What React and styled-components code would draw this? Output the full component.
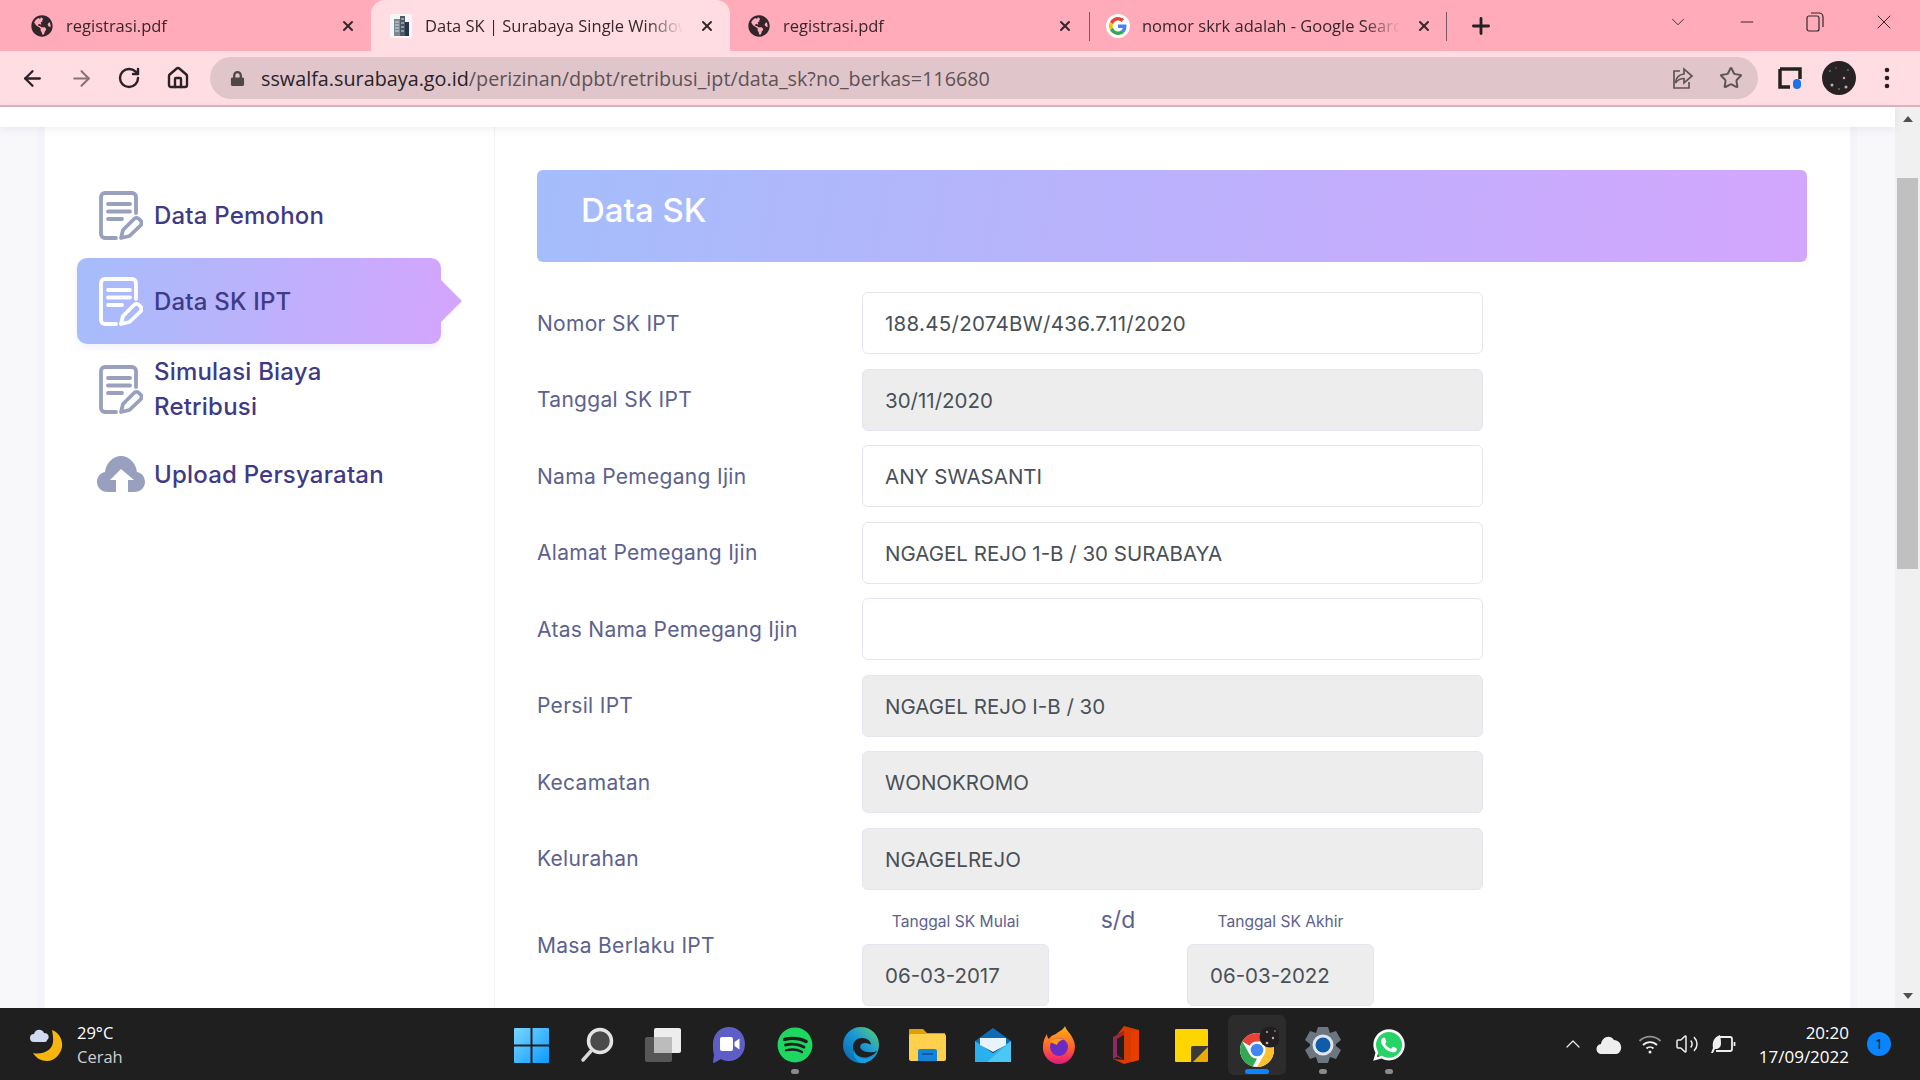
import React from "react";
import styled, { createGlobalStyle } from "styled-components";
import { ArrowLeft, ArrowRight, RotateCw, Home, Star, X, Plus, ChevronDown, Minus, ChevronUp, Volume2 } from "lucide-react";
import { FaGlobeAmericas, FaSpotify, FaWhatsapp, FaLock } from "react-icons/fa";

const GlobalStyle = createGlobalStyle`
  html, body { margin: 0; padding: 0; height: 100%; overflow: hidden; }
  * { box-sizing: border-box; }
  body { font-family: "Inter", "Noto Sans", sans-serif; }
`;

const Screen = styled.div`
  width: 1920px;
  height: 1080px;
  display: flex;
  flex-direction: column;
  overflow: hidden;
  background: #fff;
`;

/* browser chrome */
const TabStrip = styled.div`
  height: 51px;
  flex: none;
  background: #ffabb9;
  display: flex;
  align-items: stretch;
  font-family: "Open Sans", "Noto Sans", sans-serif;
`;

const Tab = styled.div`
  position: relative;
  width: ${(p) => p.$width}px;
  flex: none;
  display: flex;
  align-items: center;
  padding: 0 ${(p) => p.$padRight || 15}px 0 ${(p) => p.$pad}px;
  gap: 12px;
  color: #35272c;
  font-size: 16.5px;
  background: ${(p) => (p.$active ? "#ffdde3" : "transparent")};
  border-radius: ${(p) => (p.$active ? "14px 14px 0 0" : "0")};
  &::after {
    content: "";
    display: ${(p) => (p.$divider ? "block" : "none")};
    position: absolute;
    right: 0;
    top: 12px;
    height: 29px;
    width: 1px;
    background: #7a5a62;
  }
`;

const TabTitle = styled.span`
  flex: 1;
  min-width: 0;
  margin-right: 4px;
  overflow: hidden;
  white-space: nowrap;
  -webkit-mask-image: linear-gradient(to right, #000 86%, transparent 100%);
  mask-image: linear-gradient(to right, #000 86%, transparent 100%);
`;

const TabFavicon = styled.span`
  width: 24px;
  height: 24px;
  flex: none;
  display: flex;
  align-items: center;
  justify-content: center;
`;

const StripTail = styled.div`
  flex: 1;
  display: flex;
  align-items: center;
  padding: 0 2px 0 21px;
  color: #222;
`;

const WindowButtons = styled.div`
  margin-left: auto;
  display: flex;
  align-items: center;
  height: 100%;
  padding-bottom: 8px;
`;

const WindowButton = styled.span`
  width: 68.5px;
  display: flex;
  justify-content: center;
  color: #33282b;
`;

const Toolbar = styled.div`
  height: 56px;
  flex: none;
  background: #ffdde3;
  border-bottom: 2px solid #d9b4bc;
  display: flex;
  align-items: center;
  padding: 0 0 0 20px;
`;

const NavButton = styled.span`
  width: 48.5px;
  flex: none;
  display: flex;
  color: ${(p) => (p.$muted ? "#85757a" : "#2a2226")};
`;

const AddressBar = styled.div`
  width: 1548px;
  height: 42px;
  margin-left: -4px;
  flex: none;
  border-radius: 21px;
  background: #e0c6ca;
  display: flex;
  align-items: center;
  padding: 0 3px 0 20px;
  font-family: "Open Sans", "Noto Sans", sans-serif;
  font-size: 19.8px;
  color: #5f5257;
`;

const UrlText = styled.div`
  margin-left: 16px;
  flex: 1;
  white-space: nowrap;
  b { font-weight: 400; color: #2b2226; }
`;

const BarIcon = styled.span`
  width: 48px;
  display: flex;
  justify-content: center;
  color: #5f5458;
`;

const ToolbarRight = styled.div`
  display: flex;
  align-items: center;
  margin-left: 20px;
  gap: 20px;
  color: #2a2226;
`;

const MenuDotsWrap = styled.span`
  display: flex;
  margin-left: 8px;
`;

/* page */
const Viewport = styled.div`
  flex: 1;
  min-height: 0;
  display: flex;
`;

const Page = styled.div`
  flex: 1;
  min-width: 0;
  display: flex;
  flex-direction: column;
  background: #f8f8fb;
`;

const TopBand = styled.div`
  height: 20px;
  flex: none;
  background: #fff;
  box-shadow: 0 2px 10px rgba(90, 90, 130, 0.1);
  position: relative;
`;

const Card = styled.div`
  flex: 1;
  margin-left: 45px;
  width: 1805px;
  background: #fff;
  display: flex;
  min-height: 0;
  box-shadow: 7px 0 0 #f4f4fa, -7px 0 0 #f4f4fa;
`;

const Sidebar = styled.nav`
  width: 450px;
  flex: none;
  border-right: 1px solid #f0f0f5;
  padding: 45px 0 0 32px;
`;

const MenuItem = styled.div`
  position: relative;
  width: 364px;
  min-height: ${(p) => p.$h || 86}px;
  display: flex;
  align-items: center;
  gap: 9px;
  padding: 0 0 0 20px;
  border-radius: 10px;
  color: #3f3a85;
  font-size: 24px;
  letter-spacing: 0.2px;
  font-weight: 500;
  line-height: 35px;
  background: ${(p) => (p.$active ? "linear-gradient(100deg, #a5bdfb, #d3a6fd)" : "transparent")};
  box-shadow: ${(p) => (p.$active ? "0 3px 6px rgba(120,120,200,0.12)" : "none")};
  &::after {
    content: "";
    display: ${(p) => (p.$active ? "block" : "none")};
    position: absolute;
    left: 100%;
    top: 22px;
    border-left: 21px solid #d3a6fd;
    border-top: 21px solid transparent;
    border-bottom: 21px solid transparent;
  }
`;

const MenuIcon = styled.span`
  width: 48px;
  flex: none;
  display: flex;
  justify-content: center;
`;

const Main = styled.main`
  flex: 1;
  min-width: 0;
  padding: 43px 43px 0 42px;
`;

const Banner = styled.div`
  height: 92px;
  border-radius: 6px;
  background: linear-gradient(100deg, #a5bdfb, #d3a6fd);
  color: #fff;
  font-size: 33px;
  font-weight: 500;
  padding: 20px 0 0 44px;
  line-height: 40px;
  margin-bottom: 30px;
`;

const Row = styled.div`
  width: 946px;
  display: grid;
  grid-template-columns: 325px 621px;
  align-items: center;
  margin-bottom: 14.5px;
`;

const Label = styled.div`
  font-size: 21px;
  letter-spacing: 0.3px;
  color: #5d618e;
  padding-bottom: ${(p) => p.$pb || 0}px;
`;

const Field = styled.div`
  height: 62px;
  border: 1px solid #e4e6ef;
  border-radius: 6px;
  background: ${(p) => (p.$readOnly ? "#ededed" : "#fff")};
  color: #495057;
  font-size: 20.5px;
  letter-spacing: ${(p) => p.$spacing || 0}px;
  line-height: 61px;
  padding: 0 22px;
  white-space: nowrap;
`;

const DateColumns = styled.div`
  display: grid;
  grid-template-columns: 187px 138px 187px;
`;

const DateColumn = styled.div`
  display: flex;
  flex-direction: column;
`;

const SmallLabel = styled.div`
  height: 40px;
  font-size: 15.6px;
  color: #5d618e;
  text-align: center;
  line-height: 36px;
`;

const Until = styled.div`
  text-align: center;
  font-size: 23px;
  color: #5d618e;
  line-height: 32px;
`;

/* scrollbar */
const ScrollTrack = styled.div`
  width: 25px;
  flex: none;
  background: #f0f0f0;
  display: flex;
  flex-direction: column;
  align-items: center;
`;

const ScrollArrow = styled.div`
  height: 24px;
  flex: none;
  display: flex;
  align-items: center;
  &::before {
    content: "";
    border-left: 5.5px solid transparent;
    border-right: 5.5px solid transparent;
    ${(p) => (p.$down ? "border-top: 6px solid #505050;" : "border-bottom: 6px solid #505050;")}
  }
`;

const ScrollThumb = styled.div`
  width: 21px;
  height: 391px;
  margin-top: 47px;
  margin-bottom: auto;
  background: #c0c0c0;
`;

/* taskbar */
const Taskbar = styled.footer`
  height: 72px;
  flex: none;
  background: #1f1f1f;
  display: grid;
  grid-template-columns: 1fr 924px 1fr;
  color: #fff;
  font-family: "Open Sans", "Noto Sans", sans-serif;
`;

const Weather = styled.div`
  display: flex;
  align-items: center;
  padding-left: 28px;
  gap: 13px;
`;

const WeatherText = styled.div`
  font-size: 16.5px;
  line-height: 24px;
  padding-top: 2px;
  span { display: block; color: #cfcfcf; }
`;

const AppRow = styled.div`
  display: grid;
  grid-template-columns: repeat(14, 66px);
`;

const AppSlot = styled.div`
  position: relative;
  display: flex;
  align-items: center;
  justify-content: center;
  padding-top: 2px;
  &::before {
    content: "";
    display: ${(p) => (p.$active ? "block" : "none")};
    position: absolute;
    inset: 7px 4px 5px 4px;
    background: #2c2c2c;
    border-radius: 6px;
  }
  &::after {
    content: "";
    display: ${(p) => (p.$state ? "block" : "none")};
    position: absolute;
    bottom: 6px;
    left: 50%;
    transform: translateX(-50%);
    height: 5px;
    border-radius: 3px;
    width: ${(p) => (p.$state === "active" ? 24 : 8)}px;
    background: ${(p) => (p.$state === "active" ? "#0a84ff" : "#8a8a8a")};
  }
  svg { position: relative; }
`;

const Tray = styled.div`
  position: relative;
  display: flex;
  align-items: center;
  justify-content: flex-end;
  padding-right: 71px;
`;

const TrayIcon = styled.span`
  width: ${(p) => p.$w}px;
  display: flex;
  justify-content: center;
  color: #eee;
`;

const Clock = styled.div`
  margin-left: 17px;
  padding-top: 1px;
  text-align: right;
  font-size: 17px;
  line-height: 24px;
`;

const Badge = styled.div`
  position: absolute;
  right: 29px;
  bottom: 24px;
  width: 24px;
  height: 24px;
  border-radius: 50%;
  background: #0a84ff;
  color: #111;
  font-size: 14px;
  line-height: 24px;
  text-align: center;
`;

const DocIcon = ({ color }) => (
  <svg width="44" height="49" viewBox="0 0 44 49" fill="none" stroke={color} strokeWidth="3.8" strokeLinecap="round" strokeLinejoin="round">
    <path d="M37 22V6a4 4 0 0 0-4-4H6a4 4 0 0 0-4 4v37a4 4 0 0 0 4 4h11" />
    <path d="M9 13h22M9 20.500h22M9 28h14" />
    <path d="M22 47l2-8 11-11a3.500 3.500 0 0 1 5 0l1.500 1.500a3.500 3.500 0 0 1 0 5L30.500 45z" />
  </svg>
);

const CloudIcon = () => (
  <svg width="48" height="36" viewBox="0 0 48 36">
    <path fill="#98a0bd" d="M11 36C4 36 0 31 0 26c0-5 3-9 8-10C9 7 16 0 24 0s15 7 16 16c5 1 8 5 8 10 0 5-4 10-11 10h-6V24h6L24 13 13 24h6v12z" />
  </svg>
);

const Tab2Favicon = () => (
  <svg width="22" height="24" viewBox="0 0 22 24">
    <rect width="22" height="24" rx="2" fill="#f4f6f8" />
    <rect x="4" y="5" width="6" height="17" fill="#7d8791" />
    <rect x="10" y="2" width="5" height="20" fill="#4c5a68" />
    <rect x="15" y="8" width="4" height="14" fill="#27364f" />
    <path d="M5 8h4M5 11h4M5 14h4M5 17h4M11 5h3M11 9h3M11 13h3M11 17h3" stroke="#d5dbe1" />
  </svg>
);

const GoogleG = () => (
  <svg width="24" height="24" viewBox="0 0 48 48">
    <circle cx="24" cy="24" r="24" fill="#fff" />
    <g transform="translate(6 6) scale(0.75)">
      <path fill="#EA4335" d="M24 9.500c3.500 0 6.700 1.200 9.200 3.600l6.900-6.900C35.900 2.400 30.500 0 24 0 14.600 0 6.500 5.400 2.600 13.200l8 6.200C12.500 13.700 17.800 9.500 24 9.500z" />
      <path fill="#4285F4" d="M46.500 24.500c0-1.600-.1-3.100-.4-4.500H24v9h12.700c-.6 3-2.200 5.500-4.700 7.200l7.700 6c4.500-4.200 6.800-10.300 6.800-17.700z" />
      <path fill="#FBBC05" d="M10.500 28.600c-.5-1.400-.8-3-.8-4.600s.3-3.200.8-4.600l-8-6.200C.9 16.500 0 20.100 0 24s.9 7.500 2.600 10.800z" />
      <path fill="#34A853" d="M24 48c6.500 0 11.900-2.100 15.900-5.800l-7.700-6c-2.200 1.400-4.900 2.300-8.200 2.300-6.200 0-11.500-4.200-13.400-9.900l-8 6.200C6.500 42.600 14.600 48 24 48z" />
    </g>
  </svg>
);

const ShareIcon = () => (
  <svg width="24" height="24" viewBox="0 0 24 24" fill="none" stroke="#5f5458" strokeWidth="1.700">
    <path d="M13 3v5c-5 .5-8 4-8.500 9 2-3 5-4.500 8.500-4.500V17l8-7z" />
    <path d="M9 5H3v17h15v-6" />
  </svg>
);

const ExtensionIcon = () => (
  <svg width="24" height="24" viewBox="0 0 24 24">
    <path fill="none" stroke="#222" strokeWidth="3.500" d="M2 3h20v10M12 21H2V3" />
    <rect x="15" y="13" width="8" height="10" rx="4" fill="#1a73e8" />
  </svg>
);

const Avatar = () => (
  <svg width="34" height="34" viewBox="0 0 34 34">
    <circle cx="17" cy="17" r="17" fill="#272324" />
    <g fill="#c9a9ae">
      <circle cx="10" cy="24" r="1.500" /><circle cx="22" cy="17" r="1.200" /><circle cx="24" cy="26" r="1.500" />
      <circle cx="8" cy="10" r=".7" /><circle cx="14" cy="7" r=".6" /><circle cx="26" cy="9" r=".7" /><circle cx="17" cy="28" r=".7" />
    </g>
  </svg>
);

const MenuDots = () => (
  <svg width="6" height="24" viewBox="0 0 6 24" fill="#222">
    <circle cx="3" cy="4" r="2.300" /><circle cx="3" cy="12" r="2.300" /><circle cx="3" cy="20" r="2.300" />
  </svg>
);

const MoonIcon = () => (
  <svg width="36" height="36" viewBox="0 0 36 36">
    <path fill="#f9b50f" d="M24 4c8 3 11 11 10 17-1.500 8-8 14-15 14-6 0-11-3-14-8 9 2 19-2 20-11 .4-4-.2-8-1-12z" />
    <path fill="#cfdcf0" d="M6 16a4 4 0 0 1 0-8c1-5 8-6 10-1 5 0 6 5 3 7 0 1-1 2-2 2z" />
  </svg>
);

const WindowsLogo = () => (
  <svg width="35" height="35" viewBox="0 0 35 35">
    <defs>
      <linearGradient id="win" x1="0" y1="0" x2="1" y2="1">
        <stop offset="0" stopColor="#7bd6ff" />
        <stop offset="1" stopColor="#0a9bff" />
      </linearGradient>
    </defs>
    <path fill="url(#win)" d="M1 0h15.500v16.500H0V1a1 1 0 0 1 1-1zm17.500 0H34a1 1 0 0 1 1 1v15.500H18.500zM0 18.500h16.500V35H1a1 1 0 0 1-1-1zm18.500 0H35V34a1 1 0 0 1-1 1H18.500z" />
  </svg>
);

const SearchApp = () => (
  <svg width="34" height="36" viewBox="0 0 34 36">
    <circle cx="20" cy="14" r="11.500" fill="#4a4a4a" stroke="#e3e3e3" strokeWidth="3.500" />
    <path d="M11 24L3 33" stroke="#d8d8d8" strokeWidth="3.500" strokeLinecap="round" />
  </svg>
);

const TaskView = () => (
  <svg width="36" height="34" viewBox="0 0 36 34">
    <rect x="9" y="0" width="27" height="25" rx="2" fill="#ededed" />
    <rect x="0" y="9" width="27" height="25" rx="2" fill="#5d5d5d" fillOpacity=".9" />
    <rect x="9" y="9" width="18" height="16" fill="#bcbcbc" />
  </svg>
);

const ChatApp = () => (
  <svg width="34" height="38" viewBox="0 0 34 38">
    <path fill="#5d5fc7" d="M17 1c9 0 16 7 16 17s-7 17-16 17c-3 0-6-.5-8-2l-7 4c-1 0-1-1-1-1l1-7C1 26 1 22 1 18 1 8 8 1 17 1z" />
    <rect x="8" y="11" width="13" height="14" rx="2" fill="#fff" />
    <path fill="#fff" d="M22.500 16l5-3.500v11l-5-3.500z" />
  </svg>
);

const EdgeApp = () => (
  <svg width="36" height="36" viewBox="0 0 36 36">
    <defs>
      <linearGradient id="edge" x1="0" y1="1" x2="1" y2="0">
        <stop offset="0" stopColor="#0b5fa8" />
        <stop offset=".55" stopColor="#1a9ad6" />
        <stop offset="1" stopColor="#5fd36a" />
      </linearGradient>
    </defs>
    <circle cx="18" cy="18" r="18" fill="url(#edge)" />
    <path fill="#1f1f1f" d="M34 24c-4 2-13 2-16-2-2-3 0-6 4-6 3 0 5 1 6 2 0-4-4-7-9-7-6 0-9 4-9 9 0 8 9 12 15 10 4-1 7-3 9-6z" />
    <path fill="#14a0e0" d="M18 36c-5-2-8-7-7-13 1 6 7 9 12 9 4 0 8-2 11-8-2 7-9 13-16 12z" />
  </svg>
);

const FolderApp = () => (
  <svg width="37" height="32" viewBox="0 0 37 32">
    <path fill="#e0a100" d="M1 0h13l4 4h18v6H0V1a1 1 0 0 1 1-1z" />
    <rect y="5" width="37" height="27" rx="2" fill="#ffd04d" />
    <path fill="#1683d8" d="M9 32V22a2 2 0 0 1 2-2h15a2 2 0 0 1 2 2v10z" />
    <rect x="13" y="24" width="11" height="2" fill="#0c5ea5" />
  </svg>
);

const MailApp = () => (
  <svg width="36" height="34" viewBox="0 0 36 34">
    <path fill="#0e6cb7" d="M0 13L18 0l18 13v4H0z" />
    <path fill="#28b1ee" d="M0 13l18 12 18-12v21H0z" />
    <path fill="#e9f3fb" d="M5 10h26v7L18 24 5 17z" />
    <path fill="#5bd0f7" d="M36 13v21H12z" opacity=".7" />
  </svg>
);

const FirefoxApp = () => (
  <svg width="34" height="38" viewBox="0 0 34 38">
    <defs>
      <linearGradient id="ff" x1="0" y1="0" x2="0" y2="1">
        <stop offset="0" stopColor="#ffb60a" />
        <stop offset=".6" stopColor="#ff5a34" />
        <stop offset="1" stopColor="#e31587" />
      </linearGradient>
    </defs>
    <path fill="url(#ff)" d="M23 0c1 5 9 9 10 20 0 10-7 18-16 18S0 30 1 20c0-5 2-9 4-12 0 3 1 4 2 5 2-4 6-4 8-6 3-2 7-4 8-7z" />
    <circle cx="17" cy="21" r="9" fill="#6a2bc4" />
    <path fill="#ff9a1a" d="M8 16c3-4 10-5 14-2-4 0-6 2-7 5-2-1-5-2-7-3z" />
  </svg>
);

const OfficeApp = () => (
  <svg width="28" height="38" viewBox="0 0 28 38">
    <path fill="#d83b01" d="M13 0l15 4v30l-15 4-11-5 11 1V5l-7 4z" />
    <path fill="#a4262c" d="M2 11l11-6v4l-7 4v16l7 5-11-5z" />
    <path fill="#8e2a63" d="M2 11h4v20l-4 2z" />
    <path fill="#eb3c00" d="M20 6l8-2v30l-8 2z" />
  </svg>
);

const StickyApp = () => (
  <svg width="33" height="33" viewBox="0 0 33 33">
    <path fill="#ffd500" d="M1 0h31a1 1 0 0 1 1 1v19L20 33H1a1 1 0 0 1-1-1V1a1 1 0 0 1 1-1z" />
    <path fill="#ecab00" d="M33 18v14a1 1 0 0 1-1 1H18z" />
    <path fill="#3a3a3a" d="M33 17v1L18 33h-2V19a2 2 0 0 1 2-2z" />
  </svg>
);

const ChromeApp = () => (
  <svg width="44" height="46" viewBox="-4 0 44 46">
    <circle cx="18" cy="28" r="17" fill="#fff" />
    <path fill="#ea4335" d="M18 11a17 17 0 0 1 14.700 8.500H18a8.500 8.500 0 0 0-7.400 4.200L3.300 19.500A17 17 0 0 1 18 11z" />
    <path fill="#34a853" d="M3.300 19.500l7.300 12.700a8.500 8.500 0 0 0 7.400 4.300L13.800 44.500A17 17 0 0 1 3.300 19.500z" />
    <path fill="#fbc02d" d="M32.700 19.500A17 17 0 0 1 18 45l7.400-12.800A8.500 8.500 0 0 0 18 19.500z" />
    <circle cx="18" cy="28" r="8" fill="#fff" />
    <circle cx="18" cy="28" r="6.300" fill="#4285f4" />
    <circle cx="31" cy="15" r="10.500" fill="#231e20" />
    <g fill="#c9a9ae"><circle cx="28" cy="10" r="1" /><circle cx="34" cy="16" r="1.200" /><circle cx="28" cy="21" r="1.300" /><circle cx="36" cy="9" r=".8" /></g>
  </svg>
);

const GearApp = () => (
  <svg width="38" height="38" viewBox="0 0 38 38">
    <path fill="#6c7681" d="M14 1h10l2 6 6-2 5 9-5 4v2l5 4-5 9-6-2-2 6H14l-2-6-6 2-5-9 5-4v-2l-5-4 5-9 6 2z" />
    <circle cx="19" cy="19" r="10.500" fill="#dfe5ea" />
    <circle cx="19" cy="19" r="7.500" fill="#0f5cab" />
  </svg>
);

const WhatsappApp = () => (
  <svg width="36" height="36" viewBox="0 0 36 36">
    <circle cx="18" cy="18" r="15" fill="#25d366" />
    <FaWhatsapp x="0" y="0" size="36" color="#fff" />
  </svg>
);

const TrayCloud = () => (
  <svg width="26" height="20" viewBox="0 0 26 20" fill="#eee">
    <path d="M6 20a5 5 0 0 1-1-10C6 3 14 0 18 6c5 0 8 5 7 9-.5 3-3 5-5 5z" />
  </svg>
);

const TrayWifi = () => (
  <svg width="24" height="22" viewBox="0 0 24 22" fill="none" stroke="#eee" strokeWidth="1.800">
    <path d="M1.500 8a15 15 0 0 1 21 0" strokeOpacity=".55" />
    <path d="M5 12a10 10 0 0 1 14 0M8.500 15.500a5 5 0 0 1 7 0" />
    <circle cx="12" cy="19" r="1.500" fill="#eee" stroke="none" />
  </svg>
);

const TrayBattery = () => (
  <svg width="26" height="20" viewBox="0 0 26 20" fill="none" stroke="#eee" strokeWidth="1.800">
    <path d="M9 3h11a2 2 0 0 1 2 2v10a2 2 0 0 1-2 2H6" />
    <path d="M24.500 8v4" />
    <path fill="#eee" stroke="none" d="M10 1C4 3 2 8 3 14L1 19h2l2-4c4 0 6-2 6-6 0-3-.5-6-1-8z" />
  </svg>
);

const FIELDS = [
  { label: "Nomor SK IPT", value: "188.45/2074BW/436.7.11/2020", spacing: 0.27 },
  { label: "Tanggal SK IPT", value: "30/11/2020", readOnly: true },
  { label: "Nama Pemegang Ijin", value: "ANY SWASANTI" },
  { label: "Alamat Pemegang Ijin", value: "NGAGEL REJO 1-B / 30 SURABAYA" },
  { label: "Atas Nama Pemegang Ijin", value: "" },
  { label: "Persil IPT", value: "NGAGEL REJO I-B / 30", readOnly: true },
  { label: "Kecamatan", value: "WONOKROMO", readOnly: true },
  { label: "Kelurahan", value: "NGAGELREJO", readOnly: true },
];

const APPS = [
  { icon: <WindowsLogo /> },
  { icon: <SearchApp /> },
  { icon: <TaskView /> },
  { icon: <ChatApp /> },
  { icon: <FaSpotify size={36} color="#1ed760" />, state: "open" },
  { icon: <EdgeApp /> },
  { icon: <FolderApp /> },
  { icon: <MailApp /> },
  { icon: <FirefoxApp /> },
  { icon: <OfficeApp /> },
  { icon: <StickyApp /> },
  { icon: <ChromeApp />, active: true, state: "active" },
  { icon: <GearApp />, state: "open" },
  { icon: <WhatsappApp />, state: "open" },
];

export default function App() {
  return (
    <Screen>
      <GlobalStyle />
      <TabStrip>
        <Tab $width={371} $pad={30} $padRight={15}>
          <TabFavicon><FaGlobeAmericas size={22} color="#33262b" /></TabFavicon>
          <TabTitle>registrasi.pdf</TabTitle>
          <X size={16} strokeWidth={3} />
        </Tab>
        <Tab $width={359} $active $pad={18} $padRight={15}>
          <TabFavicon><Tab2Favicon /></TabFavicon>
          <TabTitle>Data SK | Surabaya Single Window</TabTitle>
          <X size={16} strokeWidth={3} />
        </Tab>
        <Tab $width={360} $pad={17} $padRight={17} $divider>
          <TabFavicon><FaGlobeAmericas size={22} color="#33262b" /></TabFavicon>
          <TabTitle>registrasi.pdf</TabTitle>
          <X size={16} strokeWidth={3} />
        </Tab>
        <Tab $width={357} $pad={16} $padRight={15} $divider>
          <TabFavicon><GoogleG /></TabFavicon>
          <TabTitle>nomor skrk adalah - Google Search</TabTitle>
          <X size={16} strokeWidth={3} />
        </Tab>
        <StripTail>
          <Plus size={26} strokeWidth={2.6} />
          <WindowButtons>
            <WindowButton><ChevronDown size={22} strokeWidth={1} /></WindowButton>
            <WindowButton><Minus size={20} strokeWidth={1.2} /></WindowButton>
            <WindowButton>
              <svg width="18" height="20" viewBox="0 0 18 20" fill="none" stroke="#33282b" strokeWidth="1.200">
                <rect x="1" y="4" width="12" height="15" rx="2" /><path d="M5 1h8a4 4 0 0 1 4 4v10" />
              </svg>
            </WindowButton>
            <WindowButton><X size={24} strokeWidth={1} /></WindowButton>
          </WindowButtons>
        </StripTail>
      </TabStrip>

      <Toolbar>
        <NavButton><ArrowLeft size={25} strokeWidth={2.2} /></NavButton>
        <NavButton $muted><ArrowRight size={25} strokeWidth={2} /></NavButton>
        <NavButton><RotateCw size={24} strokeWidth={2.4} /></NavButton>
        <NavButton><Home size={24} strokeWidth={2.4} /></NavButton>
        <AddressBar>
          <FaLock size={15} color="#50474b" />
          <UrlText><b>sswalfa.surabaya.go.id</b>/perizinan/dpbt/retribusi_ipt/data_sk?no_berkas=116680</UrlText>
          <BarIcon><ShareIcon /></BarIcon>
          <BarIcon><Star size={24} strokeWidth={2} /></BarIcon>
        </AddressBar>
        <ToolbarRight>
          <ExtensionIcon />
          <Avatar />
          <MenuDotsWrap><MenuDots /></MenuDotsWrap>
        </ToolbarRight>
      </Toolbar>

      <Viewport>
        <Page>
          <TopBand />
          <Card>
            <Sidebar>
              <MenuItem>
                <MenuIcon><DocIcon color="#98a0bd" /></MenuIcon>
                Data Pemohon
              </MenuItem>
              <MenuItem $active>
                <MenuIcon><DocIcon color="#ffffff" /></MenuIcon>
                Data SK IPT
              </MenuItem>
              <MenuItem $h={90}>
                <MenuIcon><DocIcon color="#98a0bd" /></MenuIcon>
                <span>Simulasi Biaya<br />Retribusi</span>
              </MenuItem>
              <MenuItem $h={80}>
                <MenuIcon><CloudIcon /></MenuIcon>
                Upload Persyaratan
              </MenuItem>
            </Sidebar>
            <Main>
              <Banner>Data SK</Banner>
              {FIELDS.map((f) => (
                <Row key={f.label}>
                  <Label>{f.label}</Label>
                  <Field $readOnly={f.readOnly} $spacing={f.spacing}>{f.value}</Field>
                </Row>
              ))}
              <Row>
                <Label $pb={20}>Masa Berlaku IPT</Label>
                <DateColumns>
                  <DateColumn>
                    <SmallLabel>Tanggal SK Mulai</SmallLabel>
                    <Field $readOnly>06-03-2017</Field>
                  </DateColumn>
                  <Until>s/d</Until>
                  <DateColumn>
                    <SmallLabel>Tanggal SK Akhir</SmallLabel>
                    <Field $readOnly>06-03-2022</Field>
                  </DateColumn>
                </DateColumns>
              </Row>
            </Main>
          </Card>
        </Page>
        <ScrollTrack>
          <ScrollArrow />
          <ScrollThumb />
          <ScrollArrow $down />
        </ScrollTrack>
      </Viewport>

      <Taskbar>
        <Weather>
          <MoonIcon />
          <WeatherText>29°C<span>Cerah</span></WeatherText>
        </Weather>
        <AppRow>
          {APPS.map((a, i) => (
            <AppSlot key={i} $active={a.active} $state={a.state}>{a.icon}</AppSlot>
          ))}
        </AppRow>
        <Tray>
          <TrayIcon $w={27}><ChevronUp size={24} strokeWidth={1.2} /></TrayIcon>
          <TrayIcon $w={45}><TrayCloud /></TrayIcon>
          <TrayIcon $w={37}><TrayWifi /></TrayIcon>
          <TrayIcon $w={36}><Volume2 size={24} strokeWidth={1.5} /></TrayIcon>
          <TrayIcon $w={37}><TrayBattery /></TrayIcon>
          <Clock>20:20<br />17/09/2022</Clock>
          <Badge>1</Badge>
        </Tray>
      </Taskbar>
    </Screen>
  );
}
